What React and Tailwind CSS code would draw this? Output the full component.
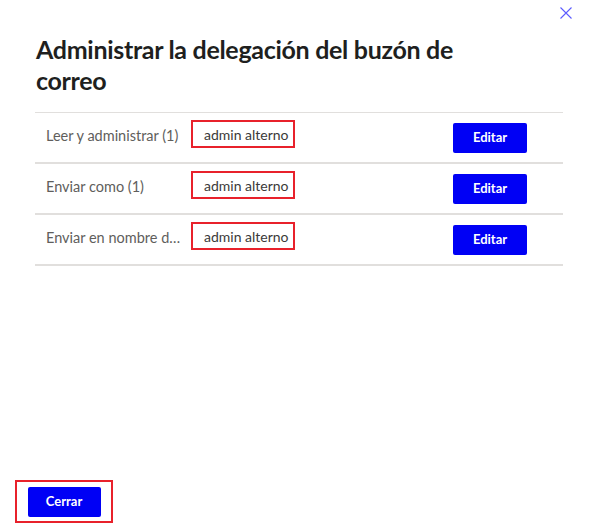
import React from 'react';

const rows = [
  { label: 'Leer y administrar (1)', value: 'admin alterno' },
  { label: 'Enviar como (1)', value: 'admin alterno' },
  { label: 'Enviar en nombre de (1)', value: 'admin alterno' },
];

export default function App() {
  return (
    <div
      className="w-[589px] h-[528px] bg-white flex flex-col"
      style={{ fontFamily: 'Lato, "Open Sans", sans-serif' }}
    >
      {/* close */}
      <div className="flex justify-end pt-[7px] pr-[17px]">
        <button className="w-[12px] h-[12px] text-[#5b5bff]">
          <svg viewBox="0 0 12 12" width="12" height="12">
            <path d="M0.5 0.5 L11.5 11.5 M11.5 0.5 L0.5 11.5" stroke="currentColor" strokeWidth="1.1" fill="none" />
          </svg>
        </button>
      </div>

      {/* title */}
      <h1 className="pl-[36px] pr-[100px] mt-[15px] text-[25px] leading-[31px] font-bold text-[#201f1e] tracking-[-0.3px]">
        Administrar la delegación del buzón de correo
      </h1>

      {/* table */}
      <div className="mx-[35px] mt-[16px] w-[528px] border-t border-[#e1dfdd]">
        {rows.map((r) => (
          <div key={r.label} className="h-[51px] border-b-2 border-[#e1dfdd] flex items-center">
            <div className="w-[156px] pl-[11px] pr-[9px] text-[14.5px] text-[#605e5c] truncate self-start mt-[12px]">
              {r.label}
            </div>
            <div className="w-[104px] h-[28px] self-start mt-[7px] border-2 border-[#e8212b] flex items-center pl-[11px] text-[14px] text-[#3b3a39] whitespace-nowrap">
              {r.value}
            </div>
            <div className="flex-1 flex justify-end pr-[36px]">
              <button className="w-[74px] h-[30px] bg-[#0000f5] rounded-[2px] text-white text-[13px] font-bold">
                Editar
              </button>
            </div>
          </div>
        ))}
      </div>

      <div className="flex-1" />

      {/* footer */}
      <div className="pl-[15px] pb-[5px]">
        <div className="w-[98px] h-[43px] border-2 border-[#e8212b] flex items-center justify-center">
          <button className="w-[73px] h-[30px] bg-[#0000f5] rounded-[2px] text-white text-[13px] font-bold">
            Cerrar
          </button>
        </div>
      </div>
    </div>
  );
}
